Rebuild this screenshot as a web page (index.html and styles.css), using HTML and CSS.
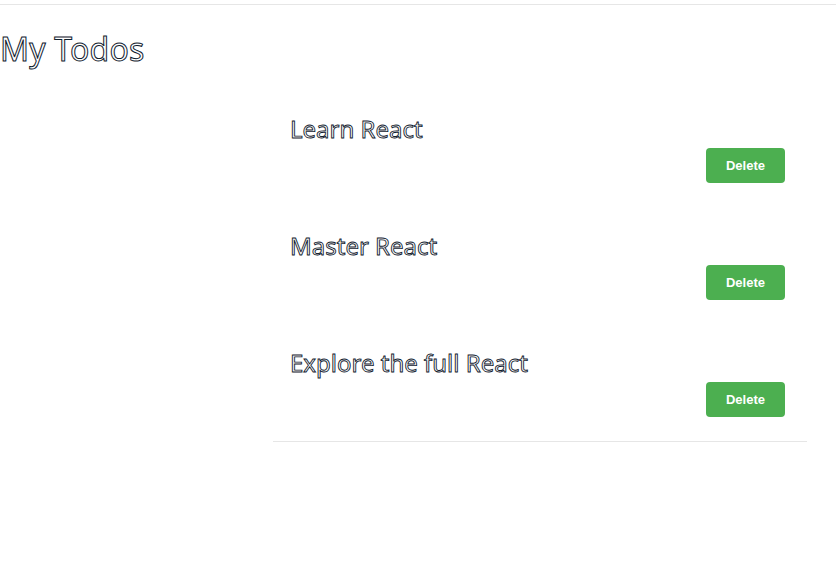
FILE: index.html
```html
<!DOCTYPE html>
<html>
<head>
<meta charset="utf-8">
<link rel="stylesheet" href="styles.css">
</head>
<body>
<div class="topbar"></div>
<h1 class="page-title">My Todos</h1>
<div class="todo-list">
  <div class="todo-item">
    <h2 class="todo-title">Learn React</h2>
    <button class="delete-btn">Delete</button>
  </div>
  <div class="todo-item">
    <h2 class="todo-title">Master React</h2>
    <button class="delete-btn">Delete</button>
  </div>
  <div class="todo-item">
    <h2 class="todo-title">Explore the full React</h2>
    <button class="delete-btn">Delete</button>
  </div>
</div>
</body>
</html>
```
FILE: styles.css
```css
html, body {
  margin: 0;
  padding: 0;
  background: #fff;
}
body {
  font-family: "Noto Sans", "Open Sans", sans-serif;
}
.topbar {
  height: 4px;
  border-bottom: 1px solid #e6e6e6;
}
.page-title {
  margin: 22px 0 0 0;
  font-size: 32px;
  line-height: 44px;
  font-weight: 400;
  letter-spacing: 0.2px;
  color: #fff;
  -webkit-text-stroke: 1px #10202e;
}
.todo-list {
  margin: 19px 29px 0 273px;
  border-bottom: 1px solid #e6e6e6;
}
.todo-item {
  display: flex;
  flex-direction: column;
  padding: 23px 22px 24px 17px;
}
.todo-title {
  margin: 0;
  font-size: 24px;
  line-height: 32px;
  font-weight: 400;
  color: #fff;
  -webkit-text-stroke: 0.9px #10202e;
}
.delete-btn {
  align-self: flex-end;
  margin-top: 3px;
  width: 79px;
  height: 35px;
  border: none;
  border-radius: 4px;
  background: #4caf50;
  color: #fff;
  font-family: "Liberation Sans", Arial, sans-serif;
  font-size: 13px;
  font-weight: bold;
  padding: 0;
}
```
